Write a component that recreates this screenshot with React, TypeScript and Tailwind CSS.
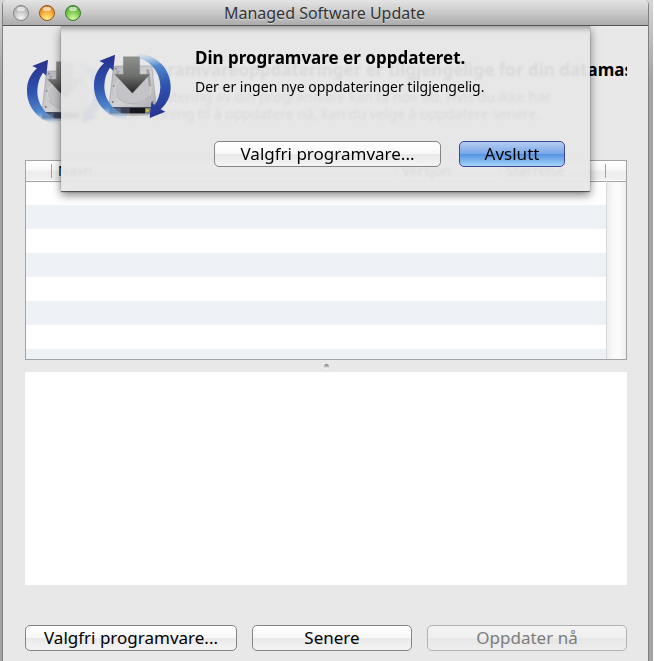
import { useId } from "react"
import type { ButtonHTMLAttributes } from "react"
import clsx from "clsx"

const ROW_COUNT = 8

const lights = [
  { label: "Lukk", color: "bg-[radial-gradient(circle_at_50%_85%,#f4f4f4,#c4c4c4_50%,#a4a4a4)] border-[#858585]" },
  { label: "Minimer", color: "bg-[radial-gradient(circle_at_50%_90%,#fff08a,#f6ab35_50%,#c8701c)] border-[#95561f]" },
  { label: "Zoom", color: "bg-[radial-gradient(circle_at_50%_90%,#d8fca0,#7cc950_50%,#43962f)] border-[#3c7a30]" },
]

function UpdateIcon() {
  const id = useId()
  const arc = `${id}-arc`
  const metal = `${id}-metal`
  const arrow = `${id}-arrow`

  return (
    <svg viewBox="12 12 246 228" className="h-[76px] w-[82px] shrink-0" aria-hidden="true">
      <defs>
        <linearGradient id={arc} gradientUnits="userSpaceOnUse" x1="50" y1="40" x2="84" y2="234">
          <stop offset="0" stopColor="#29328f" />
          <stop offset="0.45" stopColor="#2f55b0" />
          <stop offset="0.75" stopColor="#4f86cc" />
          <stop offset="1" stopColor="#9fcbee" stopOpacity="0" />
        </linearGradient>
        <linearGradient id={metal} x1="0" y1="0" x2="1" y2="1">
          <stop offset="0" stopColor="#b4b4b8" />
          <stop offset="0.5" stopColor="#d2d2d5" />
          <stop offset="1" stopColor="#a6a6ac" />
        </linearGradient>
        <linearGradient id={arrow} x1="0" y1="0" x2="0" y2="1">
          <stop offset="0" stopColor="#8e908e" />
          <stop offset="0.5" stopColor="#6f716f" />
          <stop offset="1" stopColor="#262626" />
        </linearGradient>
      </defs>

      {/* hard drive */}
      <ellipse cx="134" cy="209" rx="74" ry="7" fill="#000" opacity="0.18" />
      <path d="M84 66H184Q191 66 192 73L205 186V204Q205 209 200 209H68Q63 209 63 204V186L76 73Q77 66 84 66Z" fill={`url(#${metal})`} stroke="#909096" strokeWidth="1.5" />
      <ellipse cx="134" cy="137" rx="55" ry="42" fill="#c3c3c8" stroke="#e2e2e5" strokeWidth="2" />
      <path d="M84 154Q100 179 134 179T184 154" fill="none" stroke="#9b9ba1" strokeWidth="2" />
      <path d="M174 76H184L190 128H182Z" fill="#9d9da3" stroke="#dedee1" strokeWidth="1" />
      <path d="M84 78H97L91 98H81Z" fill="#a7a7ac" stroke="#dedee1" strokeWidth="1" />
      <g fill="#75757b">
        <circle cx="84" cy="74" r="2.5" />
        <circle cx="77" cy="126" r="2.5" />
        <circle cx="74" cy="174" r="3" />
        <circle cx="194" cy="174" r="3" />
      </g>
      <path d="M64 190H204V204Q204 208 199 208H69Q64 208 64 204Z" fill="#5b6482" />
      <path d="M64 190H204V193H64Z" fill="#3b3f4c" />
      <path d="M98 192H125V208H98Z" fill="#3c4158" />
      <path d="M125 192H171V208H125Z" fill="#17181d" />
      <path d="M171 192H204V204Q204 208 199 208H171Z" fill="#7c7e86" />
      <path d="M174 196H182V203H174Z" fill="#d6cc3f" />

      {/* download arrow */}
      <path d="M106 38H155V91H186L133 148L80 91H106Z" fill={`url(#${arrow})`} stroke="#7d7f7d" strokeWidth="1" />

      {/* circular arrows, the second one is the first turned half round */}
      {[0, 180].map((turn) => (
        <path
          key={turn}
          transform={`rotate(${turn} 133 127)`}
          d="M81 32L34 51L48 58C28 76 17 99 18 128C19 178 57 221 118 228L116 212C74 202 48 165 49 124C50 102 56 85 66 71L76 80Z"
          fill={`url(#${arc})`}
        />
      ))}
    </svg>
  )
}

function PushButton({ primary, className, ...props }: ButtonHTMLAttributes<HTMLButtonElement> & { primary?: boolean }) {
  return (
    <button
      type="button"
      className={clsx(
        "flex h-[26px] items-center justify-center whitespace-nowrap rounded-[5px] border text-[17px] leading-6",
        primary
          ? "border-[#41469a] bg-[linear-gradient(#b5cdf1,#7ba8e8_48%,#5594e4_52%,#a5d4f7)] text-black"
          : "border-[#858585] bg-[linear-gradient(#fff,#f8f8f8_48%,#e9e9e9_52%,#f4f4f4)] text-black disabled:border-[#b2b2b2] disabled:bg-[linear-gradient(#f3f3f3,#f0f0f0_48%,#e7e7e7_52%,#eee)] disabled:text-[#7c7c7c]",
        className
      )}
      {...props}
    />
  )
}

function TitleBar() {
  return (
    <header className="flex h-[26px] items-center rounded-t-[4px] border-b border-[#555] bg-[linear-gradient(#e4e4e4,#cfcfcf_40%,#acacac)] pl-2.5">
      <div className="flex gap-2.5">
        {lights.map((light) => (
          <button
            key={light.label}
            type="button"
            aria-label={light.label}
            className={clsx("relative size-4 overflow-hidden rounded-full border", light.color)}
          >
            <span className="absolute inset-x-[3px] top-px h-1 rounded-full bg-white/60" />
          </button>
        ))}
      </div>
      <h1 className="flex-1 pr-[80px] text-center text-[16px] leading-6 text-[#333] [text-shadow:0_1px_0_#ffffff80]">
        Managed Software Update
      </h1>
    </header>
  )
}

function UpdateTable() {
  return (
    <div className="h-[200px] overflow-hidden border border-[#a3a3a3] bg-white">
      <table className="w-full table-fixed border-collapse text-left text-[14px]">
        <colgroup>
          <col className="w-[26px]" />
          <col />
          <col className="w-[104px]" />
          <col className="w-[106px]" />
          <col className="w-5" />
        </colgroup>
        <thead>
          <tr className="h-5 border-b border-[#a3a3a3] bg-[linear-gradient(#fff,#f8f8f8_48%,#ededed_52%,#f0f0f0)]">
            {["", "Navn", "Versjon", "Størrelse"].map((label) => (
              <th key={label} className="p-0 font-normal leading-[14px]">
                <span className="block h-3.5 border-r border-[#a3a3a3] pl-1.5">{label}</span>
              </th>
            ))}
            <th className="p-0" />
          </tr>
        </thead>
        <tbody>
          {Array.from({ length: ROW_COUNT }, (_, i) => (
            <tr key={i} className="h-6 even:bg-[#eef2f7]">
              <td colSpan={4} className="p-0" />
              <td className="border-l border-[#d8d8d8] bg-[linear-gradient(to_right,#ededed,#fafafa_40%,#fafafa_70%,#efefef)] p-0" />
            </tr>
          ))}
        </tbody>
      </table>
    </div>
  )
}

function StatusSheet() {
  return (
    <section
      role="dialog"
      aria-labelledby="sheet-title"
      className="absolute left-[58px] right-[58px] top-0 bg-[#e7e7e7]/94 pb-6 pl-[31px] pr-[25px] pt-[22px] shadow-[inset_0_7px_6px_-5px_#00000060,0_1px_1px_#00000080,0_4px_9px_#00000080] backdrop-blur-[1px]"
    >
      <div className="flex h-[93px] gap-[21px]">
        <UpdateIcon />
        <div>
          <h2 id="sheet-title" className="text-[17px] font-bold leading-5">
            Din programvare er oppdateret.
          </h2>
          <p className="mt-2.5 text-[14px] leading-[17px]">Der er ingen nye oppdateringer tilgjengelig.</p>
        </div>
      </div>
      <div className="flex justify-end gap-[18px]">
        <PushButton className="w-[227px]">Valgfri programvare...</PushButton>
        <PushButton primary className="w-[106px]">
          Avslutt
        </PushButton>
      </div>
    </section>
  )
}

export default function App() {
  return (
    <div className="flex min-h-screen border-r border-white bg-[linear-gradient(#d6d6d6,#a3a3a3_80px)] pl-0.5 pr-1 font-['Noto_Sans',sans-serif] text-black">
      <div className="flex min-w-0 flex-1 flex-col rounded-t-[5px] border-x border-[#808080] bg-[#e8e8e8]">
        <TitleBar />
        <main className="relative flex flex-1 flex-col overflow-hidden pb-2.5 pl-[22px] pr-[21px]">
          <div className="flex h-[134px] gap-[21px] overflow-hidden whitespace-nowrap pt-[27px]">
            <UpdateIcon />
            <div className="pt-[7px]">
              <h2 className="text-[17px] font-bold leading-5">
                Programvareoppdateringer er tilgjengelige for din datamas
              </h2>
              <p className="mt-2 text-[14px] leading-[17px]">
                Oppdatering av din programvare kan ta noe tid. Hvis du ikke har
                <br />
                anledning til å oppdatere nå, kan du velge å oppdatere senere.
              </p>
            </div>
          </div>

          <UpdateTable />

          {/* splitter */}
          <div className="flex h-3 items-center justify-center">
            <span className="size-[5px] rounded-full bg-[linear-gradient(#777,#fff)]" />
          </div>

          <textarea readOnly aria-label="Beskrivelse" className="block min-h-[120px] w-full flex-1 resize-none bg-white outline-none" />

          <div className="mt-10 grid grid-cols-[212fr_160fr_200fr] gap-[15px]">
            <PushButton>Valgfri programvare...</PushButton>
            <PushButton>Senere</PushButton>
            <PushButton disabled>Oppdater nå</PushButton>
          </div>

          <StatusSheet />
        </main>
      </div>
    </div>
  )
}
